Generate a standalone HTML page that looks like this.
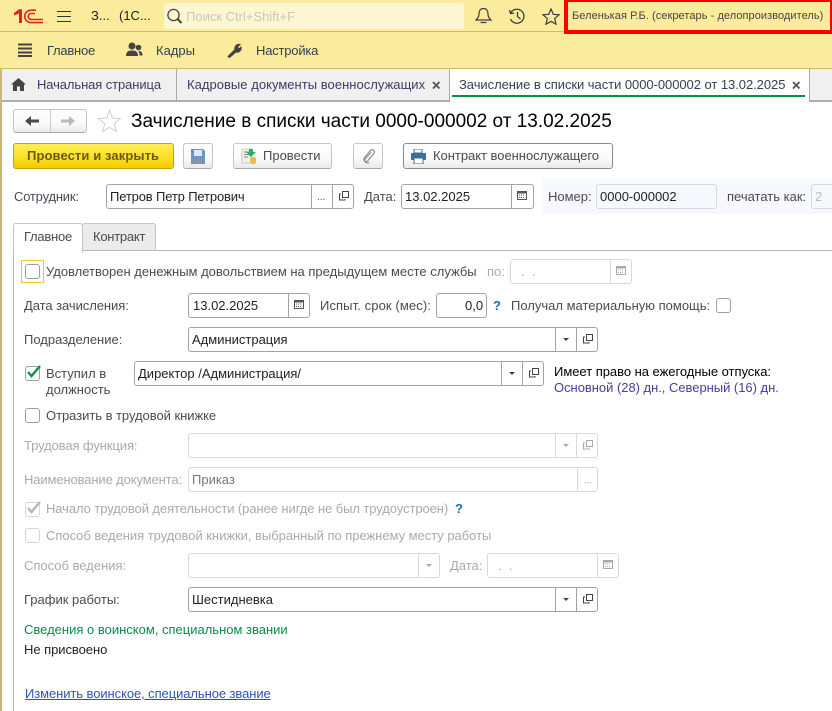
<!DOCTYPE html>
<html lang="ru"><head><meta charset="utf-8"><title>Зачисление</title>
<style>
html,body{margin:0;padding:0;background:#fff}
body{width:832px;height:711px;position:relative;overflow:hidden;font-family:"Liberation Sans",Arial,sans-serif;font-size:13px;color:#4b4b4b}
div,span,svg,a{position:absolute}
.t{white-space:nowrap;line-height:14px;height:14px;font-size:13px}
.l{color:#4a4a55}
.d{color:#aaa}
.k{color:#222}
.f{box-sizing:border-box;background:#fff;border:1px solid #a3a3a3;border-radius:3px;height:25px}
.fd{border-color:#d9d9d9}
.s{width:1px;top:0;bottom:0;background:#a3a3a3}
.fd .s{background:#d9d9d9}
.c{box-sizing:border-box;width:15px;height:15px;background:#fff;border:1px solid #9e9e9e;border-radius:3px}
.cd{border-color:#d6d6d6}
.b{box-sizing:border-box;height:26px;top:143px;border:1px solid #c4c4c4;border-bottom-color:#a8a8a8;border-radius:3px;background:linear-gradient(#fff 0%,#fafafa 60%,#e9e9e9 100%)}
</style></head><body>
<!-- top bars -->
<div style="left:0;top:0;width:832px;height:69px;background:#fbec9d"></div>
<div style="left:0;top:31px;width:832px;height:1px;background:#cdbb6c"></div>
<div style="left:0;top:68px;width:832px;height:1px;background:#cdbb6c"></div>
<svg style="left:14px;top:8px" width="30" height="16" viewBox="0 0 30 16"><path d="M0 5L5 1.200H8V15H5V5.500L0 7.500z" fill="#e3231b"/><g fill="none" stroke="#e3231b" stroke-width="1.600"><path d="M22 2.200H17a6.200 6.200 0 0 0 0 12.400H29"/><path d="M21 5.500H17.200a3 3 0 0 0 0 6H29"/></g></svg>
<svg style="left:57px;top:10px" width="15" height="12"><path d="M0 1.500H14M0 6.500H14M0 11.500H14" stroke="#333" stroke-width="1"/></svg>
<span class="t k" style="left:91px;top:9px">З...</span>
<span class="t k" style="left:119px;top:9px">(1С...</span>
<div style="left:164px;top:3px;width:300px;height:26px;background:#fdf6d2;border-radius:3px"></div>
<svg style="left:166px;top:8px" width="18" height="17"><circle cx="7.500" cy="7" r="5.600" fill="none" stroke="#444" stroke-width="1.300"/><path d="M11.500 11l4 4" stroke="#444" stroke-width="2"/></svg>
<span class="t" style="left:186px;top:10px;color:#c9c8ba">Поиск Ctrl+Shift+F</span>
<svg style="left:475px;top:7px" width="17" height="18"><path d="M8.500 1.500c-3.500 0-4.500 3-4.500 5.500 0 3-1.500 4.500-3 6h15c-1.500-1.500-3-3-3-6 0-2.500-1-5.500-4.500-5.500zM5.500 15.500h6" fill="none" stroke="#3c3c3c" stroke-width="1.200"/></svg>
<svg style="left:508px;top:8px" width="18" height="16"><path d="M3 4.500A7 7 0 1 1 2.500 11M1.500 2l1 3.500 3.500-.5M9.500 4v4.500l3 2.500" fill="none" stroke="#3c3c3c" stroke-width="1.300"/></svg>
<svg style="left:542px;top:8px" width="18" height="17"><path d="M9 1l2.300 5.300 5.700.5-4.300 3.800 1.300 5.600L9 13.300 4 16.200l1.300-5.600L1 6.800l5.700-.5z" fill="none" stroke="#3c3c3c" stroke-width="1.200"/></svg>
<div style="left:564px;top:0;width:268px;height:34px;box-sizing:border-box;border:4px solid #f00;border-right-width:2px;border-top-width:2px"></div>
<span class="t" style="left:572px;top:9px;font-size:11px;letter-spacing:.06px;color:#444">Беленькая Р.Б. (секретарь - делопроизводитель)</span>
<svg style="left:18px;top:43px" width="15" height="14"><path d="M0 1.500H14M0 5.500H14M0 9.500H14M0 13H14" stroke="#444" stroke-width="2"/></svg>
<span class="t" style="left:47px;top:44px;color:#33404f;letter-spacing:-.25px">Главное</span>
<svg style="left:126px;top:42px" width="17" height="15"><circle cx="6" cy="4" r="3.500" fill="#444"/><circle cx="12.500" cy="5.500" r="2.800" fill="#444"/><path d="M0 14c0-4 2-5.500 6-5.500s6 1.500 6 5.500zM12.500 9c2.500 0 4 1 4 4.500h-3c0-2-.5-3.500-1-4.500z" fill="#444"/></svg>
<span class="t" style="left:156px;top:44px;color:#33404f">Кадры</span>
<svg style="left:226px;top:42px" width="16" height="16"><path d="M2 14.500L9 7.500a4 4 0 0 1 5-5l-2.500 2.500 1 1.500 2-.5 .5-1a4 4 0 0 1-5 5L3.500 15.500z" fill="#444" stroke="#444"/></svg>
<span class="t" style="left:256px;top:44px;color:#33404f;letter-spacing:-.2px">Настройка</span>
<!-- tab bar -->
<div style="left:0;top:69px;width:832px;height:31px;background:#f0f0f0"></div>
<div style="left:0;top:100px;width:832px;height:2px;background:#adadad"></div>
<div style="left:0;top:69px;width:2px;height:642px;background:#cdbb6c"></div>
<svg style="left:11px;top:78px" width="15" height="13"><path d="M7.500 0L0 6.500h2V13h4V8.500h3V13h4V6.500h2z" fill="#444"/></svg>
<span class="t" style="left:37px;top:78px;color:#3c3c66;letter-spacing:-.1px">Начальная страница</span>
<div style="left:176px;top:69px;width:1px;height:31px;background:#aaa"></div>
<span class="t" style="left:187px;top:78px;color:#3c3c66;letter-spacing:.03px">Кадровые документы военнослужащих</span>
<svg style="left:432px;top:81px" width="9" height="9"><path d="M1 1l6.500 6.500M7.500 1L1 7.500" stroke="#555" stroke-width="1.800"/></svg>
<div style="left:449px;top:69px;width:361px;height:33px;box-sizing:border-box;background:#fff;border-left:1px solid #aaa;border-right:1px solid #aaa"></div>
<span class="t" style="left:459px;top:78px;color:#3c3c50;letter-spacing:-.05px">Зачисление в списки части 0000-000002 от 13.02.2025</span>
<svg style="left:792px;top:81px" width="9" height="9"><path d="M1 1l6.500 6.500M7.500 1L1 7.500" stroke="#555" stroke-width="1.800"/></svg>
<div style="left:452px;top:95px;width:353px;height:2px;background:#0a9248"></div>
<!-- nav -->
<div class="b" style="left:13px;top:109px;width:74px;height:24px"></div>
<div style="left:50px;top:110px;width:1px;height:22px;background:#ccc"></div>
<svg style="left:25px;top:115px" width="14" height="12"><path d="M0 6l6-5v3.500h8v3H6V11z" fill="#4a4a4a"/></svg>
<svg style="left:61px;top:115px" width="14" height="12"><path d="M14 6L8 1v3.500H0v3h8V11z" fill="#b8b8b8"/></svg>
<svg style="left:97px;top:109px" width="25" height="24"><path d="M12.500 1.500l3 7.500 8 .6-6.200 5.200 2 7.700-6.800-4.200-6.800 4.200 2-7.700-6.200-5.200 8-.6z" fill="#fff" stroke="#cfcfcf"/></svg>
<span class="t" style="left:131px;top:111px;font-size:19px;line-height:21px;height:21px;color:#000">Зачисление в списки части 0000-000002 от 13.02.2025</span>
<!-- buttons -->
<div class="b" style="left:13px;width:161px;border-color:#c7a500;background:linear-gradient(#ffee55 0%,#fde22a 50%,#f2cb00 100%)"></div>
<span class="t" style="left:27px;top:149px;font-weight:bold;color:#6a5a10;letter-spacing:.1px">Провести и закрыть</span>
<div class="b" style="left:183px;width:30px"></div>
<svg style="left:191px;top:149px" width="14" height="15"><path d="M0 0h12l2 2v13H0z" fill="#6d94c4"/><path d="M3 1h8v6H3z" fill="#dfe9f5"/><path d="M3 10h8v5H3z" fill="#8a96a6"/></svg>
<div class="b" style="left:233px;width:99px"></div>
<svg style="left:241px;top:148px" width="16" height="17"><path d="M1 1h9v14H1z" fill="#f1f1e6" stroke="#aaa" stroke-width=".6"/><path d="M3 4h5M3 6.500h5M3 9h4" stroke="#888"/><path d="M8 1h4v3h3l-5 5-5-5h3z" fill="#2fae5d"/><rect x="9" y="9" width="6" height="7" rx="2" fill="#e6c244"/></svg>
<span class="t" style="left:263px;top:149px">Провести</span>
<div class="b" style="left:353px;width:30px"></div>
<svg style="left:361px;top:148px" width="15" height="16"><path d="M3.500 9.500L9.500 2.500a2.300 2.300 0 0 1 3.500 3L6.500 13a1.500 1.500 0 0 1-2.500-2L10 4.500M3.500 9.500a3.500 3.500 0 0 0 4.500 5" fill="none" stroke="#888" stroke-width="1.100"/></svg>
<div class="b" style="left:403px;width:210px;border-color:#8a8a8a"></div>
<svg style="left:411px;top:149px" width="15" height="15"><path d="M3 0h8v4H3z" fill="#fff" stroke="#3e6d93"/><rect x="0" y="4" width="15" height="7" rx="1" fill="#3e6d93"/><path d="M3 9h9v6H3z" fill="#fff" stroke="#3e6d93"/></svg>
<span class="t" style="left:433px;top:149px;letter-spacing:-.03px">Контракт военнослужащего</span>
<!-- header fields -->
<span class="t l" style="left:14px;top:190px;letter-spacing:-.2px">Сотрудник:</span>
<div class="f" style="left:106px;top:184px;width:248px"><span class="s" style="left:204px"></span><span class="s" style="left:225px"></span></div>
<span class="t k" style="left:110px;top:190px;letter-spacing:-.15px">Петров Петр Петрович</span>
<span class="t" style="left:317px;top:191px;font-size:10px">...</span>
<svg style="left:339px;top:191px" width="11" height="10"><path d="M3.500 .500h6v6h-6zM2 3H.5v6H6V8" fill="none" stroke="#444"/></svg>
<span class="t l" style="left:364px;top:190px">Дата:</span>
<div class="f" style="left:401px;top:184px;width:133px"><span class="s" style="left:109px"></span></div>
<span class="t k" style="left:405px;top:190px">13.02.2025</span>
<svg style="left:517px;top:190px" width="10" height="10"><path d="M0 1h10v9H0z" fill="#555"/><path d="M1 3.500h8V9H1z" fill="#fff"/><path d="M2 5h6M2 7.500h6" stroke="#555" stroke-dasharray="1 1"/></svg>
<div style="left:543px;top:179px;width:289px;height:35px;background:#f7f8fd"></div>
<span class="t l" style="left:548px;top:190px">Номер:</span>
<div class="f fd" style="left:596px;top:184px;width:121px;background:#f7f8fd"></div>
<span class="t k" style="left:600px;top:190px">0000-000002</span>
<span class="t l" style="left:727px;top:190px">печатать как:</span>
<div class="f fd" style="left:811px;top:184px;width:30px;background:#f7f8fd"></div>
<span class="t" style="left:815px;top:190px;color:#bbb">2</span>
<!-- tabs -->
<div style="left:82px;top:223px;width:74px;height:27px;box-sizing:border-box;background:#ebebeb;border:1px solid #c4c4c4;border-bottom:none;border-radius:3px 3px 0 0"></div>
<div style="left:82px;top:250px;width:750px;height:1px;background:#b8b8b8"></div>
<div style="left:13px;top:223px;width:70px;height:30px;box-sizing:border-box;background:#fff;border:1px solid #c4c4c4;border-bottom:none;border-radius:3px 3px 0 0"></div>
<div style="left:13px;top:250px;width:1px;height:461px;background:#b8b8b8"></div>
<span class="t l" style="left:24px;top:230px;letter-spacing:-.25px">Главное</span>
<span class="t l" style="left:93px;top:230px;letter-spacing:-.25px">Контракт</span>
<!-- row 1 -->
<div style="left:21px;top:260px;width:23px;height:23px;box-sizing:border-box;border:1px solid #f3c62e"></div>
<div class="c" style="left:25px;top:264px"></div>
<span class="t l" style="left:46px;top:265px">Удовлетворен денежным довольствием на предыдущем месте службы</span>
<span class="t d" style="left:487px;top:265px">по:</span>
<div class="f fd" style="left:510px;top:259px;width:122px"><span class="s" style="left:99px"></span></div>
<span class="t d" style="left:521px;top:265px">.&nbsp;&nbsp;.</span>
<svg style="left:616px;top:265px" width="10" height="10"><path d="M0 1h10v9H0z" fill="#aaa"/><path d="M1 3.500h8V9H1z" fill="#fff"/><path d="M2 5h6M2 7.500h6" stroke="#aaa" stroke-dasharray="1 1"/></svg>
<!-- row 2 -->
<span class="t l" style="left:24px;top:299px;letter-spacing:-.06px">Дата зачисления:</span>
<div class="f" style="left:188px;top:293px;width:122px"><span class="s" style="left:99px"></span></div>
<span class="t k" style="left:193px;top:299px">13.02.2025</span>
<svg style="left:294px;top:299px" width="10" height="10"><path d="M0 1h10v9H0z" fill="#555"/><path d="M1 3.500h8V9H1z" fill="#fff"/><path d="M2 5h6M2 7.500h6" stroke="#555" stroke-dasharray="1 1"/></svg>
<span class="t l" style="left:320px;top:299px;letter-spacing:.1px">Испыт. срок (мес):</span>
<div class="f" style="left:436px;top:293px;width:51px"></div>
<span class="t k" style="left:465px;top:299px">0,0</span>
<span class="t" style="left:493px;top:299px;font-weight:bold;color:#1673b1">?</span>
<span class="t l" style="left:511px;top:299px">Получал материальную помощь:</span>
<div class="c" style="left:716px;top:298px"></div>
<!-- row 3 -->
<span class="t l" style="left:24px;top:333px">Подразделение:</span>
<div class="f" style="left:188px;top:327px;width:410px"><span class="s" style="left:366px"></span><span class="s" style="left:387px"></span></div>
<span class="t k" style="left:192px;top:333px">Администрация</span>
<svg style="left:563px;top:338px" width="6" height="4"><path d="M0 0h6L3 3z" fill="#444"/></svg>
<svg style="left:583px;top:334px" width="11" height="10"><path d="M3.500 .500h6v6h-6zM2 3H.5v6H6V8" fill="none" stroke="#444"/></svg>
<!-- row 4 -->
<div class="c" style="left:25px;top:366px"></div>
<svg style="left:26px;top:364px" width="16" height="15"><path d="M2 8l3.500 4L14 2" fill="none" stroke="#0a9248" stroke-width="2.400"/></svg>
<span class="t l" style="left:46px;top:367px">Вступил в</span>
<span class="t l" style="left:46px;top:383px">должность</span>
<div class="f" style="left:134px;top:361px;width:410px"><span class="s" style="left:366px"></span><span class="s" style="left:387px"></span></div>
<span class="t k" style="left:138px;top:367px">Директор /Администрация/</span>
<svg style="left:509px;top:372px" width="6" height="4"><path d="M0 0h6L3 3z" fill="#444"/></svg>
<svg style="left:529px;top:368px" width="11" height="10"><path d="M3.500 .500h6v6h-6zM2 3H.5v6H6V8" fill="none" stroke="#444"/></svg>
<span class="t" style="left:554px;top:365px;color:#000;letter-spacing:-.03px">Имеет право на ежегодные отпуска:</span>
<span class="t" style="left:554px;top:381px;color:#4a3a9c;letter-spacing:-.03px">Основной (28) дн., Северный (16) дн.</span>
<!-- row 5 -->
<div class="c" style="left:25px;top:408px"></div>
<span class="t l" style="left:46px;top:409px;letter-spacing:-.04px">Отразить в трудовой книжке</span>
<span class="t d" style="left:24px;top:439px;letter-spacing:-.1px">Трудовая функция:</span>
<div class="f fd" style="left:188px;top:433px;width:410px"><span class="s" style="left:366px"></span><span class="s" style="left:387px"></span></div>
<svg style="left:563px;top:444px" width="6" height="4"><path d="M0 0h6L3 3z" fill="#aaa"/></svg>
<svg style="left:583px;top:440px" width="11" height="10"><path d="M3.500 .500h6v6h-6zM2 3H.5v6H6V8" fill="none" stroke="#aaa"/></svg>
<span class="t d" style="left:24px;top:473px;letter-spacing:-.12px">Наименование документа:</span>
<div class="f fd" style="left:188px;top:467px;width:410px"><span class="s" style="left:388px"></span></div>
<span class="t" style="left:192px;top:473px;color:#777">Приказ</span>
<span class="t d" style="left:584px;top:474px;font-size:10px">...</span>
<div class="c cd" style="left:25px;top:502px"></div>
<svg style="left:26px;top:500px" width="16" height="15"><path d="M2 8l3.500 4L14 2" fill="none" stroke="#b5b5b5" stroke-width="2.400"/></svg>
<span class="t d" style="left:46px;top:502px;letter-spacing:-.08px">Начало трудовой деятельности (ранее нигде не был трудоустроен)</span>
<span class="t" style="left:455px;top:502px;font-weight:bold;color:#1673b1">?</span>
<div class="c cd" style="left:25px;top:528px"></div>
<span class="t d" style="left:46px;top:529px;letter-spacing:-.03px">Способ ведения трудовой книжки, выбранный по прежнему месту работы</span>
<span class="t d" style="left:24px;top:559px">Способ ведения:</span>
<div class="f fd" style="left:188px;top:553px;width:252px"><span class="s" style="left:229px"></span></div>
<svg style="left:426px;top:564px" width="6" height="4"><path d="M0 0h6L3 3z" fill="#aaa"/></svg>
<span class="t d" style="left:450px;top:559px">Дата:</span>
<div class="f fd" style="left:487px;top:553px;width:132px"><span class="s" style="left:109px"></span></div>
<span class="t d" style="left:498px;top:559px">.&nbsp;&nbsp;.</span>
<svg style="left:603px;top:559px" width="10" height="10"><path d="M0 1h10v9H0z" fill="#aaa"/><path d="M1 3.500h8V9H1z" fill="#fff"/><path d="M2 5h6M2 7.500h6" stroke="#aaa" stroke-dasharray="1 1"/></svg>
<span class="t l" style="left:24px;top:593px">График работы:</span>
<div class="f" style="left:188px;top:587px;width:410px"><span class="s" style="left:366px"></span><span class="s" style="left:387px"></span></div>
<span class="t k" style="left:192px;top:593px">Шестидневка</span>
<svg style="left:563px;top:598px" width="6" height="4"><path d="M0 0h6L3 3z" fill="#444"/></svg>
<svg style="left:583px;top:594px" width="11" height="10"><path d="M3.500 .500h6v6h-6zM2 3H.5v6H6V8" fill="none" stroke="#444"/></svg>
<span class="t" style="left:24px;top:623px;color:#0a8a4a">Сведения о воинском, специальном звании</span>
<span class="t k" style="left:24px;top:643px;letter-spacing:-.05px">Не присвоено</span>
<span class="t" style="left:25px;top:687px;color:#2c55b5;text-decoration:underline;letter-spacing:-.08px">Изменить воинское, специальное звание</span>
</body></html>
